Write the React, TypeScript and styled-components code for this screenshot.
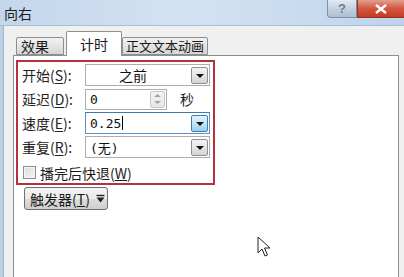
import React from "react";
import styled, { createGlobalStyle } from "styled-components";

const GlobalStyle = createGlobalStyle`
  html, body {
    margin: 0;
    padding: 0;
    width: 404px;
    height: 277px;
    overflow: hidden;
    background: #f0f0f0;
  }
  * {
    box-sizing: border-box;
  }
`;

const font = `"Noto Sans CJK SC", "Liberation Sans", sans-serif`;

function App() {
  return (
    <>
      <GlobalStyle />
      <Window>
        <TitleBar>
          <Title>向右</Title>
          <Caption>
            <HelpButton>?</HelpButton>
            <CloseButton>
              <svg width="12" height="10" viewBox="0 0 12 10">
                <path d="M1 1 L11 9 M11 1 L1 9" stroke="#fff" strokeWidth="2.4" />
              </svg>
            </CloseButton>
          </Caption>
        </TitleBar>
        <Body>
          <Frame />
          <Client>
            <Tabs>
              <Tab>效果</Tab>
              <Tab active>计时</Tab>
              <Tab>正文文本动画</Tab>
            </Tabs>
            <Panel>
              <Group>
                <Row>
                  <Label>
                    开始(<u>S</u>):
                  </Label>
                  <Combo>
                    <ComboText center>之前</ComboText>
                    <DropButton>
                      <Arrow />
                    </DropButton>
                  </Combo>
                </Row>
                <Row>
                  <Label>
                    延迟(<u>D</u>):
                  </Label>
                  <SpinBox>
                    <ComboText>0</ComboText>
                    <Spinner>
                      <svg width="9" height="14" viewBox="0 0 9 14">
                        <path d="M1 5 L4.5 2 L8 5 Z M1 9 L4.5 12 L8 9 Z" fill="#9aa4ad" />
                      </svg>
                    </Spinner>
                  </SpinBox>
                  <Unit>秒</Unit>
                </Row>
                <Row>
                  <Label>
                    速度(<u>E</u>):
                  </Label>
                  <Combo focused>
                    <ComboText>
                      0.25<Caret />
                    </ComboText>
                    <DropButton focused>
                      <Arrow />
                    </DropButton>
                  </Combo>
                </Row>
                <Row>
                  <Label>
                    重复(<u>R</u>):
                  </Label>
                  <Combo>
                    <ComboText>(无)</ComboText>
                    <DropButton>
                      <Arrow />
                    </DropButton>
                  </Combo>
                </Row>
                <CheckRow>
                  <CheckBox />
                  <CheckLabel>
                    播完后快退(<u>W</u>)
                  </CheckLabel>
                </CheckRow>
              </Group>
              <TriggerButton>
                <span>
                  触发器(<u>T</u>)
                </span>
                <svg width="9" height="10" viewBox="0 0 9 10">
                  <path d="M0.5 1.5 H8.5" stroke="#222" strokeWidth="1.4" />
                  <path d="M0.5 3.5 L4.5 8.5 L8.5 3.5 Z" fill="#222" />
                </svg>
              </TriggerButton>
            </Panel>
          </Client>
        </Body>
        <Cursor width="14" height="23" viewBox="0 0 14 23">
          <path
            d="M1 1 L1 17 L5 13 L8 20 L10.5 19 L7.5 12 L13 12 Z"
            fill="#fff"
            stroke="#222"
            strokeWidth="1"
            strokeLinejoin="round"
          />
        </Cursor>
      </Window>
    </>
  );
}

export default App;

const Window = styled.div`
  position: relative;
  width: 404px;
  height: 277px;
  display: flex;
  flex-direction: column;
  font-family: ${font};
  color: #1a1a1a;
`;

const TitleBar = styled.div`
  height: 26px;
  display: flex;
  align-items: flex-start;
  justify-content: space-between;
  background: linear-gradient(90deg, #c3d6ec 0%, #d3e2f3 45%, #c9dbef 75%, #bed3ea 100%);
  border-bottom: 1px solid #a9bdd4;
`;

const Title = styled.div`
  font-size: 14px;
  line-height: 14px;
  padding: 6px 0 0 4px;
  color: #1b1b1b;
`;

const Caption = styled.div`
  display: flex;
`;

const HelpButton = styled.div`
  width: 30px;
  height: 18px;
  display: flex;
  align-items: center;
  justify-content: center;
  font-family: "Liberation Sans", sans-serif;
  font-size: 13px;
  font-weight: bold;
  color: #6f7d8b;
  background: linear-gradient(180deg, #e1e9f2 0%, #c4d2e0 50%, #aebfd1 100%);
  border: 1px solid #7f91a6;
  border-top: none;
  border-radius: 0 0 0 4px;
`;

const CloseButton = styled.div`
  width: 47px;
  height: 18px;
  display: flex;
  align-items: center;
  justify-content: center;
  background: linear-gradient(180deg, #e3a08f 0%, #d2573d 50%, #c43c22 100%);
  border: 1px solid #8e3524;
  border-top: none;
  border-right: none;
`;

const Body = styled.div`
  flex: 1;
  display: flex;
  min-height: 0;
`;

const Frame = styled.div`
  width: 4px;
  background: #bcd1e8;
  border-right: 1px solid #9fb2c7;
`;

const Client = styled.div`
  flex: 1;
  display: flex;
  flex-direction: column;
  background: #f0f0f0;
  padding: 5px 5px 0 9px;
`;

const Tabs = styled.div`
  height: 25px;
  display: flex;
  align-items: flex-end;
  padding-left: 3px;
  position: relative;
  z-index: 1;
  margin-bottom: -1px;
`;

const Tab = styled.div<{ active?: boolean }>`
  height: ${(p) => (p.active ? "25px" : "18px")};
  margin-bottom: ${(p) => (p.active ? "0" : "1px")};
  margin-left: ${(p) => (p.active ? "2px" : "0")};
  padding: ${(p) => (p.active ? "0 13px" : "0 3px")};
  display: flex;
  align-items: ${(p) => (p.active ? "center" : "flex-end")};
  font-size: ${(p) => (p.active ? "14px" : "13px")};
  line-height: 16px;
  background: ${(p) =>
    p.active ? "#ffffff" : "linear-gradient(180deg, #f2f2f2 0%, #e4e4e4 50%, #d6d6d6 100%)"};
  border: 1px solid #8c8e94;
  border-bottom: ${(p) => (p.active ? "none" : "1px solid #8c8e94")};
  border-radius: 2px 2px 0 0;
  &:first-child {
    width: 48px;
    font-size: 14px;
    padding-left: 4px;
  }
`;

const Panel = styled.div`
  flex: 1;
  background: #ffffff;
  border: 1px solid #8c8e94;
  border-bottom: none;
  padding: 4px 0 0 2px;
`;

const Group = styled.div`
  width: 199px;
  border: 2px solid #b8303d;
  padding: 1px 3px 0 4px;
  display: flex;
  flex-direction: column;
`;

const Row = styled.div`
  height: 24px;
  display: flex;
  align-items: center;
`;

const Label = styled.div`
  width: 63px;
  font-size: 14px;
  white-space: nowrap;
  color: #222;
  u {
    text-underline-offset: 2px;
  }
`;

const Combo = styled.div<{ focused?: boolean }>`
  width: 125px;
  height: 22px;
  display: flex;
  align-items: center;
  background: #fff;
  border: 1px solid ${(p) => (p.focused ? "#5b93c9" : "#abadb3")};
  border-top-color: ${(p) => (p.focused ? "#3d7bad" : "#abadb3")};
  padding: 1px;
`;

const ComboText = styled.div<{ center?: boolean }>`
  flex: 1;
  display: flex;
  align-items: center;
  justify-content: ${(p) => (p.center ? "center" : "flex-start")};
  padding-left: ${(p) => (p.center ? "0" : "3px")};
  font-family: "DejaVu Sans Mono", "Noto Sans CJK SC", monospace;
  font-size: 13px;
  color: #111;
  ${(p) => p.center && `font-family: ${font}; font-size: 14px; padding-right: 12px;`}
`;

const Caret = styled.span`
  display: inline-block;
  width: 1px;
  height: 14px;
  background: #000;
  margin-left: 1px;
`;

const DropButton = styled.div<{ focused?: boolean }>`
  width: 17px;
  height: 17px;
  display: flex;
  align-items: center;
  justify-content: center;
  background: ${(p) =>
    p.focused
      ? "linear-gradient(180deg, #e5f4fc 0%, #c4e5f6 50%, #98d1ef 100%)"
      : "linear-gradient(180deg, #f2f2f2 0%, #e6e6e6 50%, #d4d4d4 100%)"};
  border: 1px solid ${(p) => (p.focused ? "#3c7fb1" : "#8e8f8f")};
  border-radius: 2px;
`;

const Arrow = styled.div`
  width: 0;
  height: 0;
  border-left: 4px solid transparent;
  border-right: 4px solid transparent;
  border-top: 4px solid #111;
  margin-top: 1px;
`;

const SpinBox = styled(Combo)`
  width: 82px;
  height: 21px;
`;

const Spinner = styled.div`
  width: 15px;
  height: 17px;
  display: flex;
  align-items: center;
  justify-content: center;
  background: linear-gradient(180deg, #f4f4f4 0%, #e6e6e6 100%);
  border: 1px solid #c6c8cc;
  border-radius: 2px;
`;

const Unit = styled.div`
  margin-left: 13px;
  font-size: 14px;
`;

const CheckRow = styled.div`
  height: 24px;
  display: flex;
  align-items: center;
  padding-top: 3px;
`;

const CheckBox = styled.div`
  width: 13px;
  height: 13px;
  margin-left: 1px;
  border: 1px solid #8f8f8f;
  background: linear-gradient(135deg, #dcdcdc 0%, #f4f4f4 100%);
  box-shadow: inset 0 0 0 1px #f4f4f4;
`;

const CheckLabel = styled.div`
  margin-left: 4px;
  font-size: 14px;
`;

const TriggerButton = styled.div`
  margin: 2px 0 0 8px;
  width: 84px;
  height: 23px;
  display: flex;
  align-items: center;
  gap: 6px;
  padding-left: 5px;
  font-size: 14px;
  white-space: nowrap;
  background: linear-gradient(180deg, #f2f2f2 0%, #ebebeb 50%, #dddddd 51%, #cfcfcf 100%);
  border: 1px solid #707070;
  border-radius: 3px;
`;

const Cursor = styled.svg`
  position: absolute;
  left: 257px;
  top: 236px;
`;
